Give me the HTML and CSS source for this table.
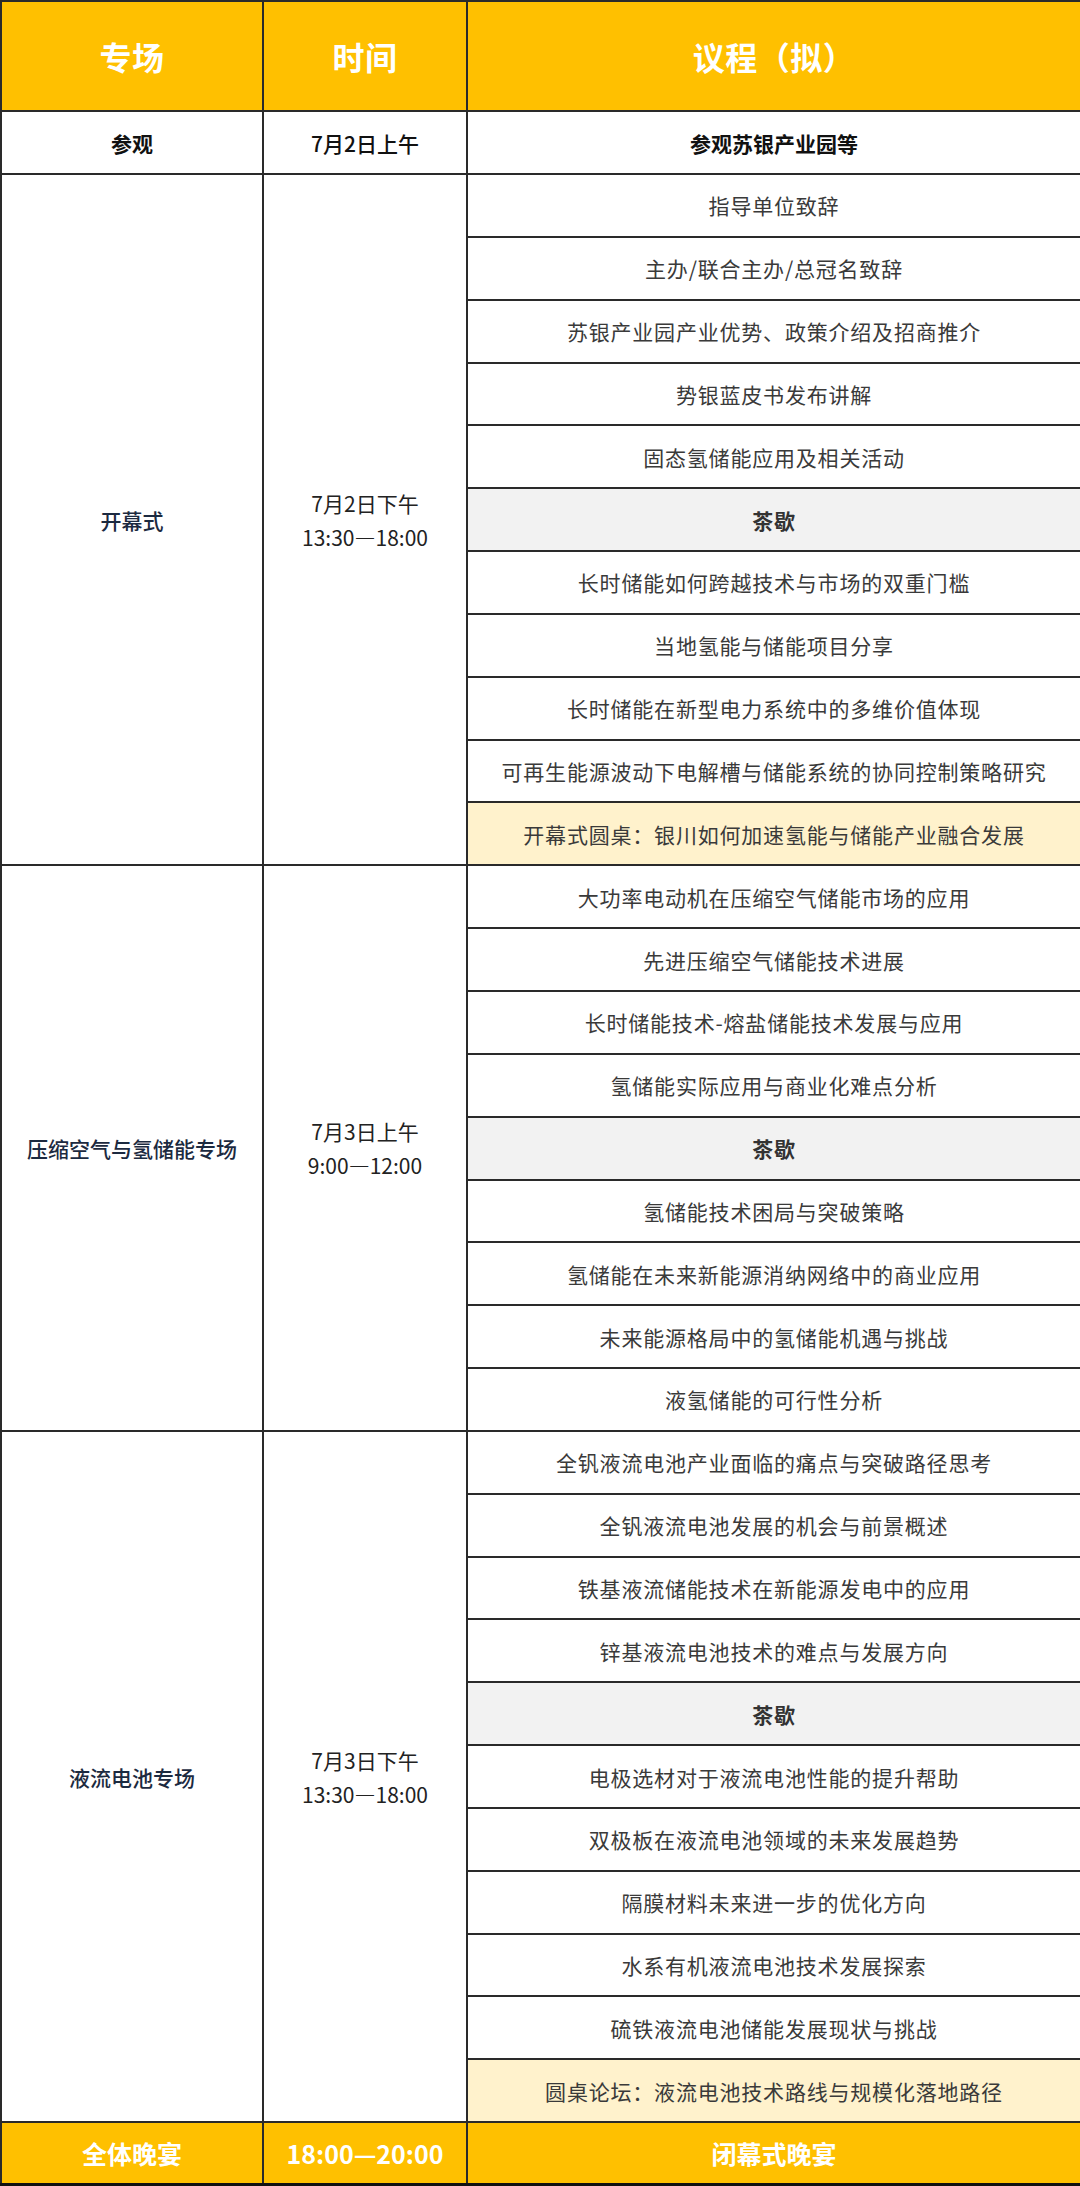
FILE: index.html
```html
<!DOCTYPE html>
<html lang="zh-CN">
<head>
<meta charset="utf-8">
<title>议程</title>
<link rel="stylesheet" href="styles.css">
</head>
<body>
<table class="agenda">
  <colgroup>
    <col class="c1">
    <col class="c2">
    <col class="c3">
  </colgroup>
  <thead>
    <tr class="head">
      <th>专场</th>
      <th>时间</th>
      <th>议程（拟）</th>
    </tr>
  </thead>
  <tbody>
    <tr class="row visit">
      <td class="sect-b">参观</td>
      <td class="time-b">7月2日上午</td>
      <td class="item-b">参观苏银产业园等</td>
    </tr>

    <tr class="row">
      <td class="sect" rowspan="11">开幕式</td>
      <td class="time" rowspan="11">7月2日下午<br>13:30—18:00</td>
      <td class="item">指导单位致辞</td>
    </tr>
    <tr class="row"><td class="item">主办/联合主办/总冠名致辞</td></tr>
    <tr class="row"><td class="item">苏银产业园产业优势、政策介绍及招商推介</td></tr>
    <tr class="row"><td class="item">势银蓝皮书发布讲解</td></tr>
    <tr class="row"><td class="item">固态氢储能应用及相关活动</td></tr>
    <tr class="row"><td class="item break">茶歇</td></tr>
    <tr class="row"><td class="item">长时储能如何跨越技术与市场的双重门槛</td></tr>
    <tr class="row"><td class="item">当地氢能与储能项目分享</td></tr>
    <tr class="row"><td class="item">长时储能在新型电力系统中的多维价值体现</td></tr>
    <tr class="row"><td class="item">可再生能源波动下电解槽与储能系统的协同控制策略研究</td></tr>
    <tr class="row"><td class="item panel">开幕式圆桌：银川如何加速氢能与储能产业融合发展</td></tr>

    <tr class="row">
      <td class="sect" rowspan="9">压缩空气与氢储能专场</td>
      <td class="time" rowspan="9">7月3日上午<br>9:00—12:00</td>
      <td class="item">大功率电动机在压缩空气储能市场的应用</td>
    </tr>
    <tr class="row"><td class="item">先进压缩空气储能技术进展</td></tr>
    <tr class="row"><td class="item">长时储能技术-熔盐储能技术发展与应用</td></tr>
    <tr class="row"><td class="item">氢储能实际应用与商业化难点分析</td></tr>
    <tr class="row"><td class="item break">茶歇</td></tr>
    <tr class="row"><td class="item">氢储能技术困局与突破策略</td></tr>
    <tr class="row"><td class="item">氢储能在未来新能源消纳网络中的商业应用</td></tr>
    <tr class="row"><td class="item">未来能源格局中的氢储能机遇与挑战</td></tr>
    <tr class="row"><td class="item">液氢储能的可行性分析</td></tr>

    <tr class="row">
      <td class="sect" rowspan="11">液流电池专场</td>
      <td class="time" rowspan="11">7月3日下午<br>13:30—18:00</td>
      <td class="item">全钒液流电池产业面临的痛点与突破路径思考</td>
    </tr>
    <tr class="row"><td class="item">全钒液流电池发展的机会与前景概述</td></tr>
    <tr class="row"><td class="item">铁基液流储能技术在新能源发电中的应用</td></tr>
    <tr class="row"><td class="item">锌基液流电池技术的难点与发展方向</td></tr>
    <tr class="row"><td class="item break">茶歇</td></tr>
    <tr class="row"><td class="item">电极选材对于液流电池性能的提升帮助</td></tr>
    <tr class="row"><td class="item">双极板在液流电池领域的未来发展趋势</td></tr>
    <tr class="row"><td class="item">隔膜材料未来进一步的优化方向</td></tr>
    <tr class="row"><td class="item">水系有机液流电池技术发展探索</td></tr>
    <tr class="row"><td class="item">硫铁液流电池储能发展现状与挑战</td></tr>
    <tr class="row"><td class="item panel">圆桌论坛：液流电池技术路线与规模化落地路径</td></tr>

    <tr class="foot">
      <td>全体晚宴</td>
      <td>18:00—20:00</td>
      <td>闭幕式晚宴</td>
    </tr>
  </tbody>
</table>
</body>
</html>
```

FILE: styles.css
```css
html, body {
  margin: 0;
  padding: 0;
  background: #ffffff;
}

.agenda {
  width: 1080px;
  border-collapse: collapse;
  table-layout: fixed;
  font-family: "Noto Sans CJK SC", "Noto Sans", sans-serif;
  border-bottom: 3px solid #111;
}

.c1 { width: 262px; }
.c2 { width: 204px; }
.c3 { width: 614px; }

.agenda th,
.agenda td {
  border: 2px solid #2a2a2a;
  padding: 0;
  text-align: center;
  vertical-align: middle;
  white-space: nowrap;
}

.head th {
  height: 108px;
  background: #ffc000;
  color: #ffffff;
  font-size: 32px;
  font-weight: 700;
  letter-spacing: 0.5px;
}

.row {
  height: 62.85px;
}

.visit {
  height: 63px;
}

.sect-b,
.item-b {
  font-size: 21px;
  font-weight: 700;
  color: #111;
}

.time-b {
  font-size: 21px;
  font-weight: 500;
  color: #111;
}

.sect {
  font-size: 21px;
  font-weight: 500;
  color: #1c2a40;
}

.time {
  font-size: 21px;
  line-height: 34px;
  color: #222;
}

.item {
  font-size: 21px;
  letter-spacing: 0.8px;
  color: #3a3a3a;
  border-top-color: #5a5a5a;
  border-bottom-color: #5a5a5a;
}

.break {
  background: #f2f2f2;
  font-weight: 700;
  color: #333;
}

.panel {
  background: #fff2cc;
  color: #3a3a3a;
}

.foot td {
  height: 60px;
  background: #ffc000;
  color: #ffffff;
  font-size: 25px;
  font-weight: 700;
}
```
